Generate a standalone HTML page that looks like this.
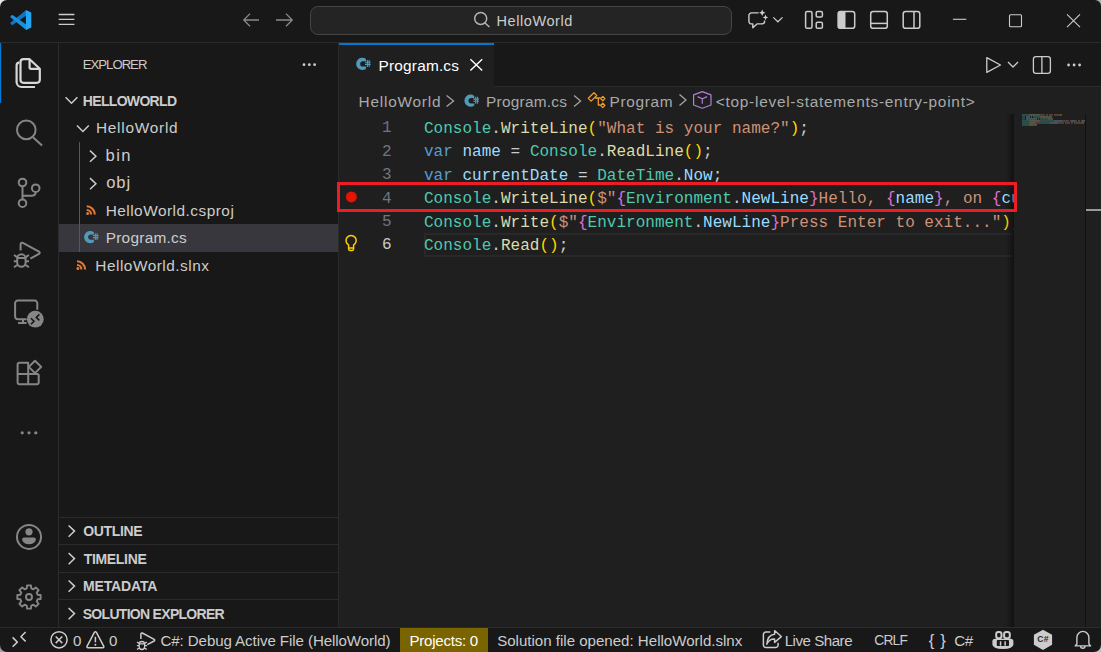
<!DOCTYPE html>
<html><head><meta charset="utf-8">
<style>
*{box-sizing:border-box;margin:0;padding:0}
html,body{width:1101px;height:652px;overflow:hidden;background:#181818;font-family:"Liberation Sans",sans-serif;color:#cccccc}
.a{position:absolute;white-space:pre}
.bg{position:absolute}
#ov{position:absolute;left:0;top:0;width:1101px;height:652px}
.code{font-family:"Liberation Mono",monospace;font-size:16px;letter-spacing:0.02px}
.ln{font-family:"Liberation Mono",monospace;font-size:16px;color:#6e7681}
.t{color:#4ec9b0}.m{color:#dcdcaa}.s{color:#ce9178}.k{color:#569cd6}.v{color:#9cdcfe}.p{color:#cccccc}.y{color:#ffd700}.pk{color:#da70d6}
</style></head><body>
<!-- backgrounds -->
<div class="bg" style="left:0;top:42px;width:1101px;height:1px;background:#2b2b2b"></div>
<div class="bg" style="left:58px;top:43px;width:1px;height:584px;background:#2b2b2b"></div>
<div class="bg" style="left:338px;top:43px;width:1px;height:584px;background:#2b2b2b"></div>
<!-- editor area -->
<div class="bg" style="left:339px;top:43px;width:762px;height:584px;background:#1f1f1f"></div>
<div class="bg" style="left:494px;top:43px;width:607px;height:43px;background:#181818"></div>
<div class="bg" style="left:494px;top:86px;width:607px;height:1px;background:#2b2b2b"></div>
<div class="bg" style="left:339px;top:43px;width:155px;height:2px;background:#0078d4"></div>
<!-- status bar -->
<div class="bg" style="left:0;top:627px;width:1101px;height:1px;background:#2b2b2b"></div>
<div class="bg" style="left:400px;top:628px;width:88px;height:24px;background:#7a6400"></div>
<!-- command center -->
<div class="bg" style="left:310px;top:6px;width:422px;height:29px;background:#242424;border:1px solid #454545;border-radius:8px"></div>
<!-- sidebar selection -->
<div class="bg" style="left:59px;top:224px;width:279px;height:28px;background:#37373d"></div>
<div class="bg" style="left:79px;top:142px;width:1px;height:110px;background:#585858"></div>
<!-- sidebar section borders -->
<div class="bg" style="left:59px;top:517px;width:279px;height:1px;background:#2b2b2b"></div>
<div class="bg" style="left:59px;top:544px;width:279px;height:1px;background:#2b2b2b"></div>
<div class="bg" style="left:59px;top:572px;width:279px;height:1px;background:#2b2b2b"></div>
<div class="bg" style="left:59px;top:599px;width:279px;height:1px;background:#2b2b2b"></div>

<!--TEXTS-->
<div id="t_title" class="a" style="left:496.47px;top:10.58px;font-size:14.50px;line-height:20px;font-weight:400;letter-spacing:0.584px;color:#cccccc">HelloWorld</div>
<div id="t_expl" class="a" style="left:82.81px;top:55.43px;font-size:13.20px;line-height:20px;font-weight:400;letter-spacing:-1.030px;color:#cccccc">EXPLORER</div>
<div id="t_hw" class="a" style="left:82.85px;top:91.05px;font-size:14.00px;line-height:20px;font-weight:700;letter-spacing:-0.684px;color:#cccccc">HELLOWORLD</div>
<div id="t_f1" class="a" style="left:95.91px;top:118.36px;font-size:15.40px;line-height:20px;font-weight:400;letter-spacing:0.753px;color:#cccccc">HelloWorld</div>
<div id="t_bin" class="a" style="left:105.61px;top:145.65px;font-size:16.60px;line-height:20px;font-weight:400;letter-spacing:1.302px;color:#cccccc">bin</div>
<div id="t_obj" class="a" style="left:106.26px;top:172.95px;font-size:16.60px;line-height:20px;font-weight:400;letter-spacing:0.858px;color:#cccccc">obj</div>
<div id="t_csproj" class="a" style="left:105.64px;top:200.76px;font-size:15.40px;line-height:20px;font-weight:400;letter-spacing:0.494px;color:#cccccc">HelloWorld.csproj</div>
<div id="t_prog" class="a" style="left:105.64px;top:228.26px;font-size:15.40px;line-height:20px;font-weight:400;letter-spacing:0.275px;color:#cccccc">Program.cs</div>
<div id="t_slnx" class="a" style="left:95.33px;top:255.66px;font-size:15.40px;line-height:20px;font-weight:400;letter-spacing:0.500px;color:#cccccc">HelloWorld.slnx</div>
<div id="t_outl" class="a" style="left:83.25px;top:521.45px;font-size:14.00px;line-height:20px;font-weight:700;letter-spacing:-0.332px;color:#cccccc">OUTLINE</div>
<div id="t_time" class="a" style="left:83.68px;top:548.95px;font-size:14.00px;line-height:20px;font-weight:700;letter-spacing:-0.310px;color:#cccccc">TIMELINE</div>
<div id="t_meta" class="a" style="left:82.97px;top:576.45px;font-size:14.00px;line-height:20px;font-weight:700;letter-spacing:-0.145px;color:#cccccc">METADATA</div>
<div id="t_sol" class="a" style="left:82.73px;top:603.95px;font-size:14.00px;line-height:20px;font-weight:700;letter-spacing:-0.703px;color:#cccccc">SOLUTION EXPLORER</div>
<div id="t_tab" class="a" style="left:378.62px;top:55.66px;font-size:15.40px;line-height:20px;font-weight:400;letter-spacing:0.179px;color:#ffffff">Program.cs</div>
<div id="t_bc1" class="a" style="left:358.59px;top:92.46px;font-size:15.40px;line-height:20px;font-weight:400;letter-spacing:0.769px;color:#a9a9a9">HelloWorld</div>
<div id="t_bc2" class="a" style="left:486.10px;top:92.46px;font-size:15.40px;line-height:20px;font-weight:400;letter-spacing:0.230px;color:#a9a9a9">Program.cs</div>
<div id="t_bc3" class="a" style="left:609.48px;top:92.46px;font-size:15.40px;line-height:20px;font-weight:400;letter-spacing:0.665px;color:#a9a9a9">Program</div>
<div id="t_bc4" class="a" style="left:715.77px;top:92.46px;font-size:15.40px;line-height:20px;font-weight:400;letter-spacing:0.742px;color:#a9a9a9">&lt;top-level-statements-entry-point&gt;</div>
<div id="s_e" class="a" style="left:73.07px;top:630.77px;font-size:15.10px;line-height:20px;font-weight:400;letter-spacing:0.000px;color:#cccccc">0</div>
<div id="s_w" class="a" style="left:109.07px;top:630.77px;font-size:15.10px;line-height:20px;font-weight:400;letter-spacing:0.000px;color:#cccccc">0</div>
<div id="s_dbg" class="a" style="left:160.41px;top:630.77px;font-size:15.10px;line-height:20px;font-weight:400;letter-spacing:-0.082px;color:#cccccc">C#: Debug Active File (HelloWorld)</div>
<div id="s_proj" class="a" style="left:409.46px;top:630.77px;font-size:15.10px;line-height:20px;font-weight:400;letter-spacing:-0.253px;color:#ffffff">Projects: 0</div>
<div id="s_sol" class="a" style="left:497.14px;top:630.77px;font-size:15.10px;line-height:20px;font-weight:400;letter-spacing:-0.011px;color:#cccccc">Solution file opened: HelloWorld.slnx</div>
<div id="s_ls" class="a" style="left:784.63px;top:630.77px;font-size:15.10px;line-height:20px;font-weight:400;letter-spacing:-0.471px;color:#cccccc">Live Share</div>
<div id="s_crlf" class="a" style="left:874.23px;top:631.32px;font-size:13.80px;line-height:20px;font-weight:400;letter-spacing:-0.789px;color:#cccccc">CRLF</div>
<div id="s_br" class="a" style="left:928.67px;top:631.28px;font-size:16.80px;line-height:20px;font-weight:400;letter-spacing:0.616px;color:#cccccc">{ }</div>
<div id="s_cs" class="a" style="left:954.21px;top:630.77px;font-size:15.10px;line-height:20px;font-weight:400;letter-spacing:-0.441px;color:#cccccc">C#</div>
<!--/TEXTS-->



<!-- line numbers -->
<div class="a ln" style="left:382px;top:117.2px;line-height:23.44px">1
2
3
4
5
<span style="color:#cccccc">6</span></div>
<!-- current line border -->
<div class="bg" style="left:424px;top:233px;width:589px;height:24px;border:2px solid #282828;border-right:none"></div>
<!-- code -->
<div class="a code" style="left:424px;top:117.8px;line-height:23.44px;width:590px;overflow:hidden"><span class="t">Console</span><span class="p">.</span><span class="m">WriteLine</span><span class="y">(</span><span class="s">"What is your name?"</span><span class="y">)</span><span class="p">;</span>
<span class="k">var</span><span class="p"> </span><span class="v">name</span><span class="p"> = </span><span class="t">Console</span><span class="p">.</span><span class="m">ReadLine</span><span class="y">()</span><span class="p">;</span>
<span class="k">var</span><span class="p"> </span><span class="v">currentDate</span><span class="p"> = </span><span class="t">DateTime</span><span class="p">.</span><span class="v">Now</span><span class="p">;</span>
<span class="t">Console</span><span class="p">.</span><span class="m">WriteLine</span><span class="y">(</span><span class="s">$"</span><span class="pk">{</span><span class="t">Environment</span><span class="p">.</span><span class="v">NewLine</span><span class="pk">}</span><span class="s">Hello, </span><span class="pk">{</span><span class="v">name</span><span class="pk">}</span><span class="s">, on </span><span class="pk">{</span><span class="v">currentDate</span><span class="pk">}</span>
<span class="t">Console</span><span class="p">.</span><span class="m">Write</span><span class="y">(</span><span class="s">$"</span><span class="pk">{</span><span class="t">Environment</span><span class="p">.</span><span class="v">NewLine</span><span class="pk">}</span><span class="s">Press Enter to exit..."</span><span class="y">)</span><span class="p">;</span>
<span class="t">Console</span><span class="p">.</span><span class="m">Read</span><span class="y">()</span><span class="p">;</span></div>

<!-- minimap shadow / scrollbar -->
<div class="bg" style="left:1006px;top:114px;width:8px;height:513px;background:linear-gradient(90deg,rgba(0,0,0,0),rgba(0,0,0,0.45))"></div>
<div class="bg" style="left:1085px;top:114px;width:1px;height:513px;background:#111111"></div>
<div class="bg" style="left:1086px;top:209px;width:15px;height:2px;background:#9a9a9a"></div>
<!-- red box -->
<div class="bg" style="left:337px;top:182px;width:680px;height:30px;border:3px solid #ee1d25"></div>


<svg id="ov" viewBox="0 0 1101 652" fill="none" stroke-linecap="butt">
<defs><symbol id="csi" viewBox="0 0 15 12.5" overflow="visible">
 <path d="M9.7 1.3 A6.1 6.1 0 1 0 9.7 10.9 V8.8 H6.6 A2.7 2.7 0 0 1 6.6 3.4 H9.7 Z" fill="#519aba"/>
 <path d="M11.1 2.2 V9.1 M12.9 2.2 V9.1 M8.7 4.5 H14.4 M8.7 6.6 H14.4" stroke="#519aba" stroke-width="1.1" fill="none"/>
</symbol></defs>

<!-- VS Code logo -->
<g>
 <path fill="#0d78c9" d="M26.2 9.9 L10.7 22.4 A1 1 0 0 0 10.8 23.9 L11.6 24.7 A1 1 0 0 0 12.9 24.8 L26.2 15.6 Z"/>
 <path fill="#1a8fe0" d="M26.2 30.1 L10.7 17.6 A1 1 0 0 1 10.8 16.1 L11.6 15.3 A1 1 0 0 1 12.9 15.2 L26.2 24.4 Z"/>
 <path fill="#23a5f2" d="M25.9 9.9 L31.3 12.5 V27.5 L25.9 30.1 Z"/>
</g>
<!-- hamburger -->
<g stroke="#cccccc" stroke-width="1.3">
 <path d="M58.7 14.5H74.4M58.7 19.4H74.4M58.7 24.3H74.4"/>
</g>
<!-- nav arrows -->
<g stroke="#8a8a8a" stroke-width="1.3" stroke-linejoin="miter">
 <path d="M250 13.6 L243.8 20 L250 26.3 M244 20 H259"/>
 <path d="M286 13.6 L292.2 20 L286 26.3 M276 20 H292"/>
</g>
<!-- command center search -->
<g stroke="#b4b4b4" stroke-width="1.5">
 <circle cx="480.7" cy="18.4" r="6"/>
 <path d="M485 23 L489.4 27"/>
</g>
<!-- copilot chat -->
<g stroke="#cccccc" stroke-width="1.4" stroke-linejoin="round">
 <path d="M758.6 12.9 H751.5 A2.6 2.6 0 0 0 748.9 15.5 V21.3 A2.6 2.6 0 0 0 751.5 23.9 H752.8 V27.8 L757 23.9 H762 A2.6 2.6 0 0 0 764.6 21.3 V20.5"/>
</g>
<g fill="#cccccc">
 <path d="M762.2 9.6 L763.2 11.8 L765.4 12.8 L763.2 13.8 L762.2 16 L761.2 13.8 L759 12.8 L761.2 11.8Z"/>
 <path d="M765.5 14.6 L766.3 16.6 L768.3 17.4 L766.3 18.2 L765.5 20.2 L764.7 18.2 L762.7 17.4 L764.7 16.6Z"/>
</g>
<path stroke="#cccccc" stroke-width="1.2" d="M773.3 17.4 L777.9 21.8 L782.5 17.4"/>
<!-- layout icons -->
<g stroke="#cccccc" stroke-width="1.5">
 <rect x="805.6" y="11.5" width="6.4" height="16.8" rx="1.6"/>
 <rect x="816.2" y="11.5" width="6.2" height="5.6" rx="1.4"/>
 <rect x="816.2" y="22.2" width="6.2" height="6.1" rx="1.4"/>
 <rect x="838.1" y="11.5" width="16.6" height="16.8" rx="2.4"/>
 <rect x="870.7" y="11.5" width="16.6" height="16.8" rx="2.4"/>
 <path d="M870.7 23.4 H887.3"/>
 <rect x="903.2" y="11.5" width="16.6" height="16.8" rx="2.4"/>
 <path d="M914 11.5 V28.3"/>
</g>
<path fill="#cccccc" d="M840.5 11.5 H845.5 V28.3 H840.5 A2.4 2.4 0 0 1 838.1 25.9 V13.9 A2.4 2.4 0 0 1 840.5 11.5Z"/>
<!-- window controls -->
<g stroke="#cccccc" stroke-width="1.1">
 <path d="M952.9 19.3 H966.3"/>
 <rect x="1009.5" y="14.7" width="12" height="12" rx="1"/>
 <path d="M1067 14.3 L1080 27.1 M1080 14.3 L1067 27.1"/>
</g>

<!-- activity bar -->
<rect x="0" y="43" width="1.15" height="60" fill="#0078d4"/>
<g stroke="#d7d7d7" stroke-width="2.2" stroke-linejoin="round">
 <path d="M29.6 59.2 H23.5 A3 3 0 0 0 20.5 62.2 V79.8 A3 3 0 0 0 23.5 82.8 H36.8 A3 3 0 0 0 39.8 79.8 V68.8 Z"/>
 <path d="M29.6 59.2 V67.6 A1.2 1.2 0 0 0 30.8 68.8 H39.8"/>
 <path d="M19.4 62.3 A3.2 3.2 0 0 0 16.6 65.5 V82 A5 5 0 0 0 21.6 87 H35"/>
</g>
<g stroke="#868686" stroke-width="2">
 <circle cx="26.3" cy="129.9" r="9.3"/>
 <path d="M33 137.2 L42 145.4"/>
 <circle cx="22.5" cy="182.5" r="3.8"/>
 <circle cx="22.5" cy="203.2" r="3.8"/>
 <circle cx="35.7" cy="188.2" r="3.8"/>
 <path d="M22.5 186.3 V199.4 M22.5 197 Q22.5 195.7 24 195.7 H31.5 Q35.7 195.7 35.7 192"/>
 <path d="M20.6 250.6 V244.2 A1.5 1.5 0 0 1 22.8 242.9 L39 251.6 A1.3 1.3 0 0 1 39 253.9 L30.3 258.6"/>
 <path d="M17.2 258.5 A4.2 4.2 0 0 1 25.6 258.5 V262.6 A4.2 4.2 0 0 1 17.2 262.6 Z M17.2 258 H25.6 M14 255 L17.4 257.3 M28.9 255 L25.5 257.3 M13.8 261.3 H17 M29 261.3 H25.8 M14 267.3 L17.6 264.7 M28.9 267.3 L25.3 264.7"/>
 <path d="M37.3 309.8 V303.2 A2.6 2.6 0 0 0 34.7 300.6 H17.7 A2.6 2.6 0 0 0 15.1 303.2 V316.6 A2.6 2.6 0 0 0 17.7 319.2 H26.5 M23 319.2 V322.9 M18.1 322.9 H26.5"/>
 <path stroke-linejoin="round" d="M19.3 362.8 H28.2 V384.3 H19.3 A1.7 1.7 0 0 1 17.6 382.6 V364.5 A1.7 1.7 0 0 1 19.3 362.8 Z M17.6 373.9 H37.2 A1.5 1.5 0 0 1 38.7 375.4 V382.6 A1.7 1.7 0 0 1 37 384.3 H28.2"/>
 <path stroke-linejoin="round" d="M35 360.7 L41.2 366.9 L35 373.1 L28.8 366.9 Z"/>
</g>
<circle cx="35.3" cy="319.2" r="8.4" fill="#868686"/>
<path stroke="#181818" stroke-width="1.6" fill="none" d="M30.9 318.2 L34 321.2 L30.9 324.2 M39.4 314.4 L36.3 317.4 L39.4 320.4"/>
<g fill="#868686">
 <circle cx="22.2" cy="432.8" r="1.6"/><circle cx="29" cy="432.8" r="1.6"/><circle cx="35.8" cy="432.8" r="1.6"/>
</g>
<g stroke="#868686" stroke-width="2">
 <circle cx="29" cy="536.9" r="12"/>
 <path stroke="#868686" stroke-width="1.9" stroke-linejoin="round" fill="none" d="M26.70 588.40 L27.05 585.36 L30.95 585.36 L31.30 588.40 L33.45 589.29 L35.85 587.39 L38.61 590.15 L36.71 592.55 L37.60 594.70 L40.64 595.05 L40.64 598.95 L37.60 599.30 L36.71 601.45 L38.61 603.85 L35.85 606.61 L33.45 604.71 L31.30 605.60 L30.95 608.64 L27.05 608.64 L26.70 605.60 L24.55 604.71 L22.15 606.61 L19.39 603.85 L21.29 601.45 L20.40 599.30 L17.36 598.95 L17.36 595.05 L20.40 594.70 L21.29 592.55 L19.39 590.15 L22.15 587.39 L24.55 589.29 Z"/>
 <circle cx="29" cy="597" r="3" stroke="#868686" stroke-width="1.9" fill="none"/>
</g>
<g fill="#868686">
 <circle cx="29" cy="531.8" r="3.6"/>
 <path d="M22.2 540 A2.2 2.2 0 0 1 24.4 537.6 H33.6 A2.2 2.2 0 0 1 35.8 540 A6.9 5 0 0 1 22.2 540 Z"/>
</g>
<!-- sidebar icons -->
<g fill="#cccccc"><circle cx="304" cy="64.7" r="1.4"/><circle cx="309.3" cy="64.7" r="1.4"/><circle cx="314.6" cy="64.7" r="1.4"/></g>
<g stroke="#cccccc" stroke-width="1.5" stroke-linejoin="miter">
 <path d="M65.6 97.2 L71.5 103.2 L77.4 97.2"/>
 <path d="M77 125.5 L82.9 131.5 L88.8 125.5"/>
 <path d="M90 150.6 L95.9 156.2 L90 161.8"/>
 <path d="M90 178.1 L95.9 183.7 L90 189.3"/>
 <path d="M68.6 525.5 L74.5 531.1 L68.6 536.7"/>
 <path d="M68.6 553 L74.5 558.6 L68.6 564.2"/>
 <path d="M68.6 580.5 L74.5 586.1 L68.6 591.7"/>
 <path d="M68.6 608 L74.5 613.6 L68.6 619.2"/>
</g>
<g stroke="#e37933" stroke-width="2.1" fill="none">
 <path d="M86.7 210 A4.4 4.4 0 0 1 91.1 214.4 M86.7 206.3 A8.1 8.1 0 0 1 94.8 214.4"/>
 <path d="M77 265 A4.4 4.4 0 0 1 81.4 269.4 M77 261.3 A8.1 8.1 0 0 1 85.1 269.4"/>
</g>
<g fill="#e37933"><circle cx="87.6" cy="213.5" r="1.5"/><circle cx="77.9" cy="268.5" r="1.5"/></g>

<!-- tab icons -->
<use href="#csi" x="356.3" y="57.8" width="15" height="12.5"/>
<path stroke="#ffffff" stroke-width="1.4" d="M470.4 59.2 L482.2 70.6 M482.2 59.2 L470.4 70.6"/>
<!-- explorer C# icon -->
<use href="#csi" x="84.2" y="231" width="15" height="12.5"/>
<!-- editor toolbar -->
<g stroke="#cccccc" stroke-width="1.3" stroke-linejoin="round">
 <path d="M986.8 57.6 V72.4 L1000.5 65 Z"/>
 <path d="M1008 62 L1013 67 L1018 62"/>
 <rect x="1033.4" y="56.6" width="17" height="16.8" rx="2.6"/>
 <path d="M1041.9 56.6 V73.4"/>
</g>
<g fill="#cccccc"><circle cx="1068.6" cy="65" r="1.4"/><circle cx="1074.1" cy="65" r="1.4"/><circle cx="1079.6" cy="65" r="1.4"/></g>
<g stroke="#a9a9a9" stroke-width="1.2">
 <path d="M446.6 95.5 L453.6 101 L446.6 106.5"/>
 <path d="M574.1 95.5 L580.6 101 L574.1 106.5"/>
 <path d="M679.5 94.5 L686 100 L679.5 105.5"/>
</g>
<use href="#csi" x="464.6" y="94.6" width="15" height="12.5"/>
<g stroke="#ee9d28" stroke-width="1.3" stroke-linejoin="round">
 <path d="M596.7 95.5 L593.9 92.7 L588.3 98.3 L591.1 101.1 Z"/>
 <path d="M594.9 98 H600.5 M598.3 98 V105 H600.5"/>
 <path d="M602.8 96.4 L604.9 98.6 L602.8 100.8 L600.6 98.6 Z"/>
 <path d="M602.8 103.2 L604.9 105.4 L602.8 107.6 L600.6 105.4 Z"/>
</g>
<g stroke="#b180d7" stroke-width="1.2" stroke-linejoin="round">
 <path d="M702.3 91.6 L711 94.9 V105 L702.3 108.3 L693.6 105 V94.9 Z"/>
 <path d="M697.5 96.6 L702.3 98.8 L707.1 96.6 M702.3 98.8 V103.8"/>
</g>
<!-- gutter -->
<circle cx="351.4" cy="196.9" r="5.5" fill="#e51400"/>
<g stroke="#ffcc00" stroke-width="1.5" stroke-linejoin="round">
 <path d="M348.55 244.9 A5.1 5.1 0 1 1 353.65 244.9 L353.6 246.2 V249 A1.4 1.4 0 0 1 352.2 250.4 H350 A1.4 1.4 0 0 1 348.6 249 V246.2 Z M348.6 247.9 H353.6"/>
</g>
<!-- status bar icons -->
<g stroke="#cccccc" stroke-width="1.5" stroke-linejoin="round">
 <path d="M12.6 637.4 L17.3 642.1 L12.6 646.8 M25.6 632 L20.9 636.7 L25.6 641.4"/>
 <circle cx="59" cy="639.8" r="8.1"/>
 <path d="M55.7 636.5 L62.3 643.1 M62.3 636.5 L55.7 643.1"/>
 <path d="M94.4 632.3 A1.2 1.2 0 0 1 96.4 632.3 L103.8 646.3 A1 1 0 0 1 102.9 647.7 H87.9 A1 1 0 0 1 87 646.3 Z"/>
 <path d="M95.4 636.8 V642.3"/>
 <path d="M140.9 638.9 V633.8 A1 1 0 0 1 142.3 633 L154.2 639.4 A0.9 0.9 0 0 1 154.2 641 L147.3 644.6"/>
 <path d="M139.2 644.2 A2.7 2.7 0 0 1 144.6 644.2 V646.8 A2.7 2.7 0 0 1 139.2 646.8 Z M139.2 643.9 H144.6 M137 642 L139.4 643.6 M146.8 642 L144.4 643.6 M136.9 645.6 H139.2 M147 645.6 H144.6 M137 649.5 L139.4 647.8 M146.8 649.5 L144.4 647.8" stroke-width="1.3"/>
 <path d="M770.3 632 H766 A2.6 2.6 0 0 0 763.4 634.6 V645 A2.6 2.6 0 0 0 766 647.6 H775.5 A2.6 2.6 0 0 0 778.1 645 V642.7"/>
 <path d="M774.6 630.6 L781.3 636.6 L774.6 642.4 V639 Q769 638.8 766.8 644.3 Q767.5 634.8 774.6 634.2 Z" stroke-width="1.4"/>
 <path d="M1076.9 644 V637.4 A6 6 0 0 1 1088.9 637.4 V644 L1090.6 645.9 H1075.2 Z M1080.6 646 A2.2 2.2 0 0 0 1085 646" stroke-width="1.4"/>
</g>
<g fill="#cccccc">
 <circle cx="95.4" cy="644.7" r="1"/>
</g>
<path fill="#cccccc" d="M1043 629.7 L1052.1 634.7 V644.8 L1043 650 L1033.9 644.8 V634.7 Z"/>
<text x="1037.3" y="642.2" font-family="Liberation Sans" font-weight="bold" font-size="8.6" fill="#2a2540" letter-spacing="0.3">C#</text>
<g stroke="#cccccc" stroke-width="2" fill="none">
 <rect x="996.2" y="632" width="5.3" height="6.2" rx="2.2"/>
 <rect x="1004.1" y="632" width="5.7" height="6.2" rx="2.2"/>
</g>
<path fill="#cccccc" d="M992.4 641.5 Q992.4 638.8 995.2 638.8 H1010.6 Q1013.4 638.8 1013.4 641.5 V644.3 Q1013.4 649 1002.9 649 Q992.4 649 992.4 644.3 Z"/>
<rect x="996.8" y="640.1" width="12.2" height="5.9" rx="0.8" fill="#181818"/>
<rect x="999.8" y="641.3" width="1.5" height="4.4" fill="#cccccc"/>
<rect x="1004.4" y="641.3" width="1.5" height="4.4" fill="#cccccc"/>
<!-- minimap -->
<g opacity="0.42"><rect x="1022.0" y="114.30" width="7.0" height="1.3" fill="#4ec9b0"/><rect x="1029.0" y="114.30" width="1.0" height="1.3" fill="#cccccc"/><rect x="1030.0" y="114.30" width="9.0" height="1.3" fill="#dcdcaa"/><rect x="1039.0" y="114.30" width="1.0" height="1.3" fill="#ffd700"/><rect x="1040.0" y="114.30" width="5.0" height="1.3" fill="#ce9178"/><rect x="1046.0" y="114.30" width="2.0" height="1.3" fill="#ce9178"/><rect x="1049.0" y="114.30" width="4.0" height="1.3" fill="#ce9178"/><rect x="1054.0" y="114.30" width="6.0" height="1.3" fill="#ce9178"/><rect x="1060.0" y="114.30" width="1.0" height="1.3" fill="#ffd700"/><rect x="1061.0" y="114.30" width="1.0" height="1.3" fill="#cccccc"/><rect x="1022.0" y="116.30" width="3.0" height="1.3" fill="#569cd6"/><rect x="1026.0" y="116.30" width="4.0" height="1.3" fill="#9cdcfe"/><rect x="1031.0" y="116.30" width="1.0" height="1.3" fill="#cccccc"/><rect x="1033.0" y="116.30" width="7.0" height="1.3" fill="#4ec9b0"/><rect x="1040.0" y="116.30" width="1.0" height="1.3" fill="#cccccc"/><rect x="1041.0" y="116.30" width="8.0" height="1.3" fill="#dcdcaa"/><rect x="1049.0" y="116.30" width="2.0" height="1.3" fill="#ffd700"/><rect x="1051.0" y="116.30" width="1.0" height="1.3" fill="#cccccc"/><rect x="1022.0" y="118.30" width="3.0" height="1.3" fill="#569cd6"/><rect x="1026.0" y="118.30" width="11.0" height="1.3" fill="#9cdcfe"/><rect x="1038.0" y="118.30" width="1.0" height="1.3" fill="#cccccc"/><rect x="1040.0" y="118.30" width="8.0" height="1.3" fill="#4ec9b0"/><rect x="1048.0" y="118.30" width="1.0" height="1.3" fill="#cccccc"/><rect x="1049.0" y="118.30" width="3.0" height="1.3" fill="#9cdcfe"/><rect x="1052.0" y="118.30" width="1.0" height="1.3" fill="#cccccc"/><rect x="1022.0" y="120.30" width="7.0" height="1.3" fill="#4ec9b0"/><rect x="1029.0" y="120.30" width="1.0" height="1.3" fill="#cccccc"/><rect x="1030.0" y="120.30" width="9.0" height="1.3" fill="#dcdcaa"/><rect x="1039.0" y="120.30" width="1.0" height="1.3" fill="#ffd700"/><rect x="1040.0" y="120.30" width="2.0" height="1.3" fill="#ce9178"/><rect x="1042.0" y="120.30" width="1.0" height="1.3" fill="#da70d6"/><rect x="1043.0" y="120.30" width="11.0" height="1.3" fill="#4ec9b0"/><rect x="1054.0" y="120.30" width="1.0" height="1.3" fill="#cccccc"/><rect x="1055.0" y="120.30" width="7.0" height="1.3" fill="#9cdcfe"/><rect x="1062.0" y="120.30" width="1.0" height="1.3" fill="#da70d6"/><rect x="1063.0" y="120.30" width="6.0" height="1.3" fill="#ce9178"/><rect x="1070.0" y="120.30" width="1.0" height="1.3" fill="#da70d6"/><rect x="1071.0" y="120.30" width="4.0" height="1.3" fill="#9cdcfe"/><rect x="1075.0" y="120.30" width="1.0" height="1.3" fill="#da70d6"/><rect x="1076.0" y="120.30" width="1.0" height="1.3" fill="#ce9178"/><rect x="1078.0" y="120.30" width="2.0" height="1.3" fill="#ce9178"/><rect x="1081.0" y="120.30" width="1.0" height="1.3" fill="#da70d6"/><rect x="1082.0" y="120.30" width="3.0" height="1.3" fill="#9cdcfe"/><rect x="1022.0" y="122.30" width="7.0" height="1.3" fill="#4ec9b0"/><rect x="1029.0" y="122.30" width="1.0" height="1.3" fill="#cccccc"/><rect x="1030.0" y="122.30" width="5.0" height="1.3" fill="#dcdcaa"/><rect x="1035.0" y="122.30" width="1.0" height="1.3" fill="#ffd700"/><rect x="1036.0" y="122.30" width="2.0" height="1.3" fill="#ce9178"/><rect x="1038.0" y="122.30" width="1.0" height="1.3" fill="#da70d6"/><rect x="1039.0" y="122.30" width="11.0" height="1.3" fill="#4ec9b0"/><rect x="1050.0" y="122.30" width="1.0" height="1.3" fill="#cccccc"/><rect x="1051.0" y="122.30" width="7.0" height="1.3" fill="#9cdcfe"/><rect x="1058.0" y="122.30" width="1.0" height="1.3" fill="#da70d6"/><rect x="1059.0" y="122.30" width="5.0" height="1.3" fill="#ce9178"/><rect x="1065.0" y="122.30" width="5.0" height="1.3" fill="#ce9178"/><rect x="1071.0" y="122.30" width="2.0" height="1.3" fill="#ce9178"/><rect x="1074.0" y="122.30" width="8.0" height="1.3" fill="#ce9178"/><rect x="1082.0" y="122.30" width="1.0" height="1.3" fill="#ffd700"/><rect x="1083.0" y="122.30" width="1.0" height="1.3" fill="#cccccc"/><rect x="1022.0" y="124.30" width="7.0" height="1.3" fill="#4ec9b0"/><rect x="1029.0" y="124.30" width="1.0" height="1.3" fill="#cccccc"/><rect x="1030.0" y="124.30" width="4.0" height="1.3" fill="#dcdcaa"/><rect x="1034.0" y="124.30" width="2.0" height="1.3" fill="#ffd700"/><rect x="1036.0" y="124.30" width="1.0" height="1.3" fill="#cccccc"/></g>
<!-- window corners -->
<path fill="#e8e8e8" d="M0 0 H7 A7 7 0 0 0 0 7 Z"/>
<path fill="#b0b0b0" d="M1101 0 H1095 A6 6 0 0 1 1101 6 Z"/>
<path fill="#9aa3ad" d="M0 652 H7 A7 7 0 0 1 0 645 Z"/>
<path fill="#c4c4c4" d="M1101 652 H1094 A7 7 0 0 0 1101 645 Z"/>
<!--MORE3-->
</svg>
</body></html>
